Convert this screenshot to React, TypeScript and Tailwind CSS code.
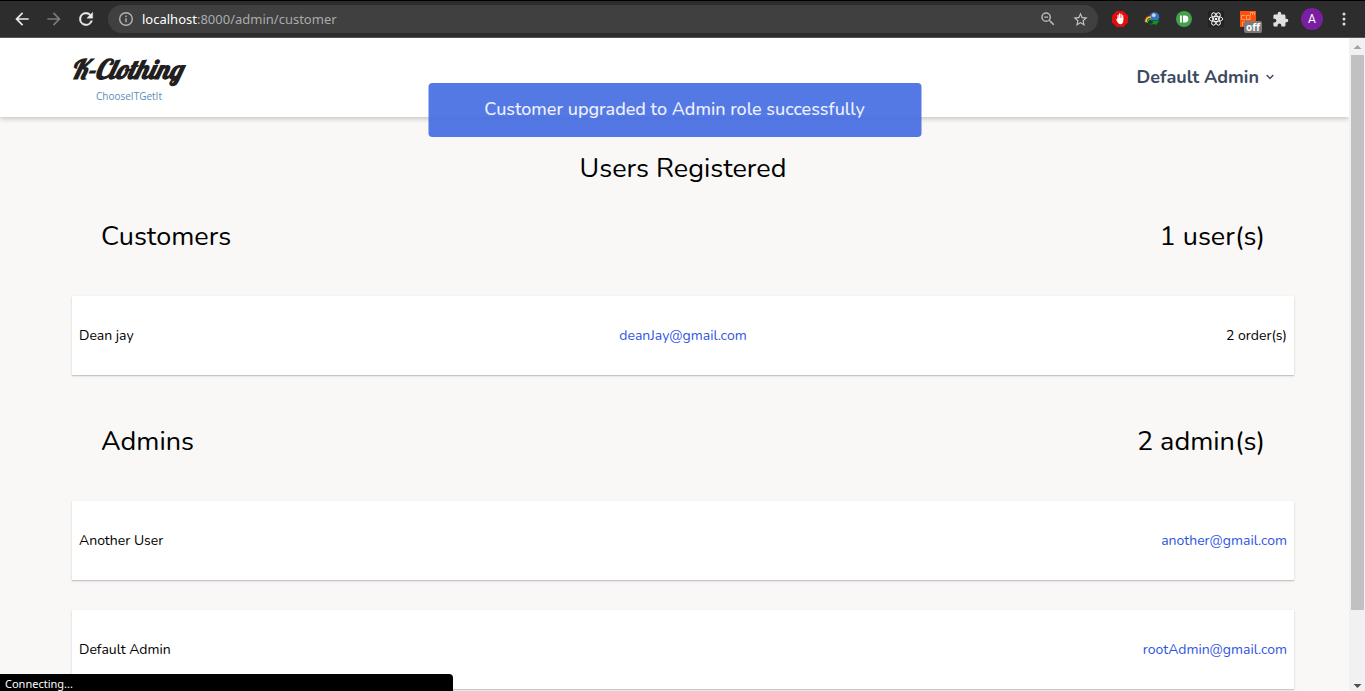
import type { ReactNode } from 'react';

const sans = "font-['Nunito','Lato',sans-serif]";

function ChromeButton({ label, children }: { label: string; children: ReactNode }) {
  return (
    <button type="button" aria-label={label} className="flex size-8 shrink-0 items-center justify-center">
      {children}
    </button>
  );
}

function BrowserBar() {
  return (
    <div className="flex h-[38px] shrink-0 items-center border-t border-b border-t-black border-b-[#565656] bg-[#2d2d2d] pl-[6px] pr-[5px]">
      <ChromeButton label="Back">
        <svg width="20" height="20" viewBox="0 0 24 24" fill="#e8eaed"><path d="M20 11H7.83l5.59-5.59L12 4l-8 8 8 8 1.41-1.41L7.83 13H20v-2z" /></svg>
      </ChromeButton>
      <ChromeButton label="Forward">
        <svg width="20" height="20" viewBox="0 0 24 24" fill="#7b7b7b"><path d="M12 4l-1.41 1.41L16.17 11H4v2h12.17l-5.58 5.59L12 20l8-8z" /></svg>
      </ChromeButton>
      <ChromeButton label="Reload">
        <svg width="20" height="20" viewBox="0 0 24 24" fill="#e8eaed" stroke="#e8eaed" strokeWidth=".5"><path d="M17.65 6.35A7.96 7.96 0 0 0 12 4a8 8 0 1 0 7.73 10h-2.08A6 6 0 1 1 12 6c1.66 0 3.14.69 4.22 1.78L13 11h7V4l-2.35 2.35z" /></svg>
      </ChromeButton>
      <div className="ml-1.5 mr-1.5 flex h-7 min-w-0 flex-1 items-center rounded-full bg-[#404040] pl-[10px] pr-[2px]">
        <svg className="mr-2 shrink-0" width="16" height="16" viewBox="0 0 16 16" fill="none" stroke="#b4b4b4" strokeWidth="1.4">
          <circle cx="8" cy="8" r="6.3" />
          <path d="M8 7.2v4M8 4.6v1.5" />
        </svg>
        <div className="min-w-0 flex-1 font-['Noto_Sans',sans-serif] text-[13px] leading-5 text-[#a9abae]">
          <span className="text-white">localhost</span>:8000/admin/customer
        </div>
        <ChromeButton label="Zoom">
          <svg width="18" height="18" viewBox="0 0 24 24" fill="#b9b9b9"><path d="M15.5 14h-.79l-.28-.27A6.47 6.47 0 0 0 16 9.5 6.5 6.5 0 1 0 9.5 16c1.61 0 3.09-.59 4.23-1.57l.27.28v.79l5 4.99L20.49 19l-4.99-5zm-6 0a4.5 4.5 0 1 1 0-9 4.5 4.5 0 0 1 0 9zM7 8.800h5v1.500H7z" /></svg>
        </ChromeButton>
        <ChromeButton label="Bookmark this page">
          <svg width="17" height="17" viewBox="0 0 24 24" fill="#c4c4c4"><path d="M22 9.24l-7.19-.62L12 2 9.19 8.63 2 9.24l5.46 4.73L5.82 21 12 17.27 18.18 21l-1.63-7.03L22 9.24zM12 15.4l-3.76 2.27 1-4.28-3.32-2.88 4.38-.38L12 6.1l1.71 4.04 4.38.38-3.32 2.88 1 4.28L12 15.4z" /></svg>
        </ChromeButton>
      </div>
      <ChromeButton label="Ad blocker">
        <svg width="16" height="16" viewBox="0 0 16 16">
          <path d="M4.7 0h6.6L16 4.7v6.6L11.3 16H4.7L0 11.3V4.7z" fill="#e40d0d" />
          <path d="M6 8V4.300M7.500 7.400V2.900M9.100 7.400V3.200M10.700 8V4.600" stroke="#fff" strokeWidth="1.200" strokeLinecap="round" />
          <path d="M5.400 7h5.900v2.800c0 2-1.100 3.400-2.900 3.400-1.500 0-2.300-.9-2.900-2.200L4.200 9c-.2-.7.500-.9.900-.4z" fill="#fff" />
        </svg>
      </ChromeButton>
      <ChromeButton label="Download manager">
        <svg width="17" height="16" viewBox="0 0 17 16">
          <circle cx="10.500" cy="6" r="4.800" fill="#3674c4" />
          <circle cx="9.800" cy="4.200" r="1.900" fill="#b8d8f5" />
          <path d="M1 10.500C1 7 3.500 4.800 7 4.800" fill="none" stroke="#d7372a" strokeWidth="1.200" />
          <path d="M2 11.300c0-3.300 2-5.300 5-5.300" fill="none" stroke="#f4cf2f" strokeWidth="1.700" />
          <path d="M3.300 12c.2-2.400 1.600-4 4-4" fill="none" stroke="#2fae3b" strokeWidth="1.500" />
          <path d="M4 12.800c1.800.2 3.500-.3 5-1.300L7.600 9.300l8.400.5-4.800 5-.7-1.700c-2.300 1-4.700 1-6.500-.3z" fill="#238a2b" stroke="#0e4515" strokeWidth=".6" />
        </svg>
      </ChromeButton>
      <ChromeButton label="Pushbullet">
        <svg width="16" height="16" viewBox="0 0 16 16">
          <circle cx="8" cy="8" r="8" fill="#43a04c" />
          <path d="M4 4.600h1.800v6.800H4zM7 4.600h2a3.400 3.400 0 0 1 0 6.800H7z" fill="#fff" />
        </svg>
      </ChromeButton>
      <ChromeButton label="React Developer Tools">
        <svg width="16" height="16" viewBox="0 0 16 16" fill="none" stroke="#f0f0f0">
          <rect width="16" height="16" fill="#222" stroke="none" />
          <ellipse cx="8" cy="8" rx="6.800" ry="2.600" />
          <ellipse cx="8" cy="8" rx="6.800" ry="2.600" transform="rotate(60 8 8)" />
          <ellipse cx="8" cy="8" rx="6.800" ry="2.600" transform="rotate(120 8 8)" />
          <circle cx="8" cy="8" r="1.300" fill="#f0f0f0" stroke="none" />
        </svg>
      </ChromeButton>
      <div className="relative">
        <ChromeButton label="Extension, off">
          <svg width="16" height="16" viewBox="0 0 16 16" fill="none" stroke="#ff9c6c" strokeWidth="1">
            <rect width="16" height="16" fill="#ff4f0a" stroke="none" />
            <path d="M5 4.500H1.500v4H5" />
            <rect x="6.500" y="4.500" width="3.500" height="4" />
            <path d="M10.500 4V1.500h4V4M12.500 1.500V4M2.500 15v-4H5" />
          </svg>
        </ChromeButton>
        <span className="absolute top-[18px] left-[12px] h-3 w-[18px] rounded-[2px] bg-[#7c7c7c] text-center font-['Noto_Sans',sans-serif] text-[10px] leading-3 font-bold text-white">off</span>
      </div>
      <ChromeButton label="Extensions">
        <svg width="17" height="17" viewBox="0 0 24 24" fill="#dfe1e5"><path d="M20.500 11H19V7c0-1.100-.9-2-2-2h-4V3.500a2.500 2.500 0 0 0-5 0V5H4c-1.100 0-2 .9-2 2v3.800h1.500a2.700 2.700 0 0 1 0 5.400H2V20c0 1.100.9 2 2 2h3.800v-1.500a2.700 2.700 0 0 1 5.400 0V22H17c1.100 0 2-.9 2-2v-4h1.500a2.500 2.500 0 0 0 0-5z" /></svg>
      </ChromeButton>
      <ChromeButton label="Profile">
        <span className="flex size-[22px] items-center justify-center rounded-full bg-[#7b1fa2] font-['Roboto',sans-serif] text-[12px] text-white">A</span>
      </ChromeButton>
      <ChromeButton label="Menu">
        <svg width="4" height="14" viewBox="0 0 4 14" fill="#e0e0e0"><circle cx="2" cy="2" r="1.500" /><circle cx="2" cy="7" r="1.500" /><circle cx="2" cy="12" r="1.500" /></svg>
      </ChromeButton>
    </div>
  );
}

function Logo() {
  return (
    <a href="/" aria-label="K-Clothing home" className="block">
      <svg width="124" height="54" viewBox="0 0 124 54">
        <text x="-1" y="28" fontFamily="'Lobster', 'Liberation Serif', serif" fontSize="27" fontWeight="700" fontStyle="italic" fill="#231f20">K-Clothing</text>
        <text x="57" y="49" textAnchor="middle" fontFamily="'Open Sans', 'Noto Sans', sans-serif" fontSize="10" fontWeight="500" fill="#5b8db8">ChooseITGetIt</text>
      </svg>
    </a>
  );
}

function SectionHeading({ title, count }: { title: string; count: string }) {
  return (
    <div className="flex items-center justify-between px-[29px] text-[27px] leading-10">
      <h2>{title}</h2>
      <span>{count}</span>
    </div>
  );
}

function UserCard({ name, email, orders }: { name: string; email: string; orders?: string }) {
  return (
    <li className="flex h-[79px] items-center justify-between bg-white px-[7px] text-[14px] leading-6 shadow-[0_1px_3px_rgba(0,0,0,0.1),0_1px_1px_rgba(60,70,110,0.2)]">
      <span className={orders ? 'flex-1' : undefined}>{name}</span>
      <a href={`mailto:${email}`} className="text-[#2f55dd]">{email}</a>
      {orders && <span className="flex-1 text-right">{orders}</span>}
    </li>
  );
}

function Scrollbar() {
  return (
    <div className="flex w-4 shrink-0 flex-col items-center bg-[#f1f1f1]" aria-hidden="true">
      <svg className="shrink-0" width="16" height="17" viewBox="0 0 16 17" fill="#a3a3a3"><path d="M4.500 11h8L8.500 7z" /></svg>
      <div className="w-[13px] flex-[555] bg-[#c1c1c1]" />
      <div className="flex-[64]" />
      <svg className="shrink-0" width="16" height="17" viewBox="0 0 16 17" fill="#505050"><path d="M4.500 10h8L8.500 14z" /></svg>
    </div>
  );
}

export default function App() {
  return (
    <div className={`relative flex h-screen flex-col overflow-hidden bg-[#f9f8f6] text-black ${sans}`}>
      <BrowserBar />
      <div className="flex min-h-0 flex-1">
        <div className="relative min-w-0 flex-1 overflow-hidden">
          <header className="flex h-[79px] items-center justify-between bg-white pr-[75px] pl-[72px] shadow-[0_2px_5px_rgba(0,0,0,0.2)]">
            <Logo />
            <button type="button" className="flex items-center gap-[7px] pb-0.5 text-[18px] leading-6 font-bold text-[#3d4a5f]">
              Default Admin
              <svg width="8" height="6" viewBox="0 0 8 6" fill="none" stroke="#3d4a5f" strokeWidth="1.400"><path d="M.7 1 4 4.400 7.300 1" /></svg>
            </button>
          </header>
          <div role="status" className="absolute top-[45px] left-1/2 flex h-[54px] w-[493px] -translate-x-1/2 items-center justify-center rounded-[4px] bg-[#4169e1]/90 pb-0.5 text-[18px] leading-6 font-medium text-white/90">
            Customer upgraded to Admin role successfully
          </div>
          <main className="pt-8 pr-[55px] pl-[72px]">
            <h1 className="text-center text-[27px] leading-10">Users Registered</h1>
            <section className="mt-7">
              <SectionHeading title="Customers" count="1 user(s)" />
              <ul className="mt-[39px] flex flex-col gap-[30px]">
                <UserCard name="Dean jay" email="deanJay@gmail.com" orders="2 order(s)" />
              </ul>
            </section>
            <section className="mt-[47px]">
              <SectionHeading title="Admins" count="2 admin(s)" />
              <ul className="mt-[39px] flex flex-col gap-[30px]">
                <UserCard name="Another User" email="another@gmail.com" />
                <UserCard name="Default Admin" email="rootAdmin@gmail.com" />
              </ul>
            </section>
          </main>
        </div>
        <Scrollbar />
      </div>
      <div className="absolute bottom-0 left-0 flex h-[17px] w-[453px] items-end rounded-tr-[4px] bg-black pl-[5px] font-['Noto_Sans',sans-serif] text-[11px] leading-[14px] text-white">
        Connecting...
      </div>
    </div>
  );
}
